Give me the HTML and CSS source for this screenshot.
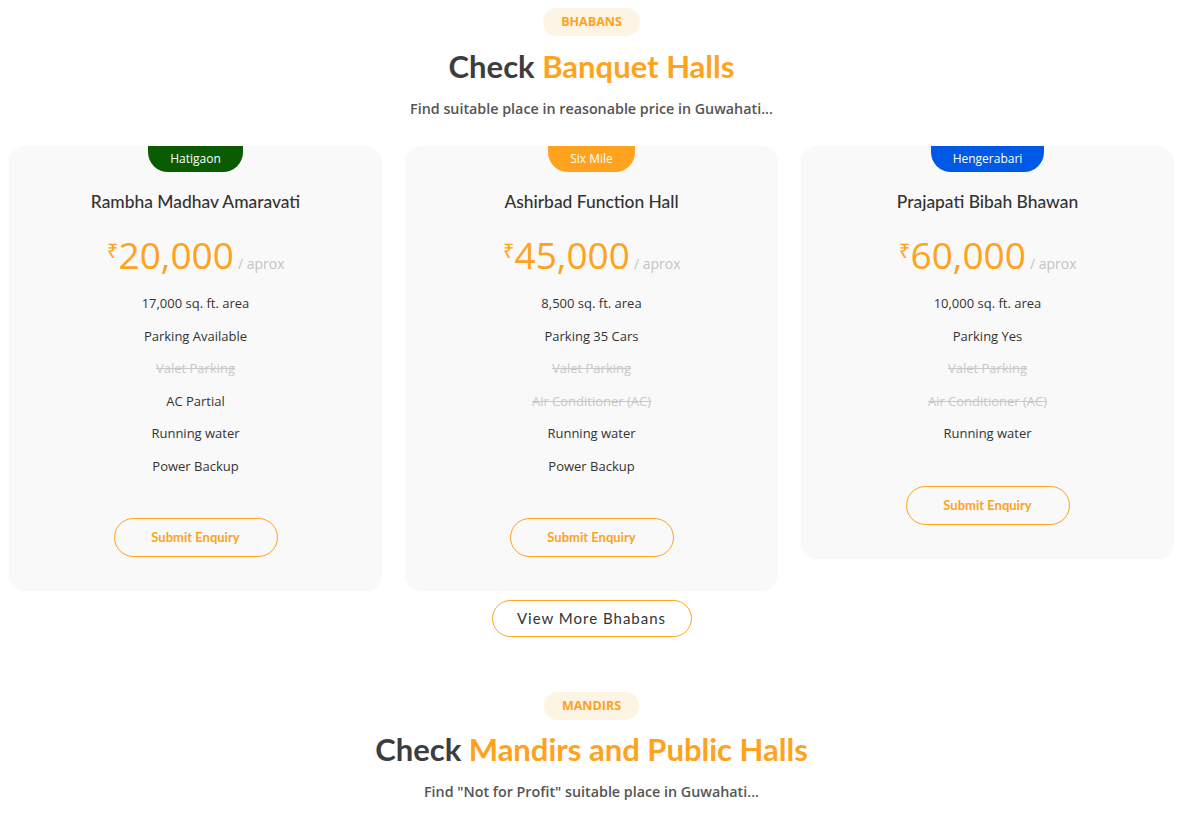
FILE: index.html
```html
<!DOCTYPE html>
<html lang="en">
<head>
    <meta charset="UTF-8">
    <meta name="viewport" content="width=device-width, initial-scale=1.0">
    <title>Bhabans - Guwahati</title>
    <link rel="stylesheet" href="styles.css">
</head>
<body>
    <div class="page">
        <section class="section">
            <div class="section-head">
                <span class="pill">BHABANS</span>
                <h2>Check <span>Banquet Halls</span></h2>
                <p>Find suitable place in reasonable price in Guwahati...</p>
            </div>

            <div class="cards">
                <div class="card">
                    <span class="area green">Hatigaon</span>
                    <h3>Rambha Madhav Amaravati</h3>
                    <div class="price"><sup>&#8377;</sup>20,000<small>/ aprox</small></div>
                    <ul class="features">
                        <li>17,000 sq. ft. area</li>
                        <li>Parking Available</li>
                        <li class="no">Valet Parking</li>
                        <li>AC Partial</li>
                        <li>Running water</li>
                        <li>Power Backup</li>
                    </ul>
                    <a href="#" class="enquiry">Submit Enquiry</a>
                </div>

                <div class="card">
                    <span class="area orange">Six Mile</span>
                    <h3>Ashirbad Function Hall</h3>
                    <div class="price"><sup>&#8377;</sup>45,000<small>/ aprox</small></div>
                    <ul class="features">
                        <li>8,500 sq. ft. area</li>
                        <li>Parking 35 Cars</li>
                        <li class="no">Valet Parking</li>
                        <li class="no">Air Conditioner (AC)</li>
                        <li>Running water</li>
                        <li>Power Backup</li>
                    </ul>
                    <a href="#" class="enquiry">Submit Enquiry</a>
                </div>

                <div class="card">
                    <span class="area blue">Hengerabari</span>
                    <h3>Prajapati Bibah Bhawan</h3>
                    <div class="price"><sup>&#8377;</sup>60,000<small>/ aprox</small></div>
                    <ul class="features">
                        <li>10,000 sq. ft. area</li>
                        <li>Parking Yes</li>
                        <li class="no">Valet Parking</li>
                        <li class="no">Air Conditioner (AC)</li>
                        <li>Running water</li>
                    </ul>
                    <a href="#" class="enquiry">Submit Enquiry</a>
                </div>
            </div>

            <div class="more">
                <a href="#" class="more-btn">View More Bhabans</a>
            </div>
        </section>

        <section class="section">
            <div class="section-head">
                <span class="pill">MANDIRS</span>
                <h2>Check <span>Mandirs and Public Halls</span></h2>
                <p>Find "Not for Profit" suitable place in Guwahati...</p>
            </div>
        </section>
    </div>
</body>
</html>
```

FILE: styles.css
```css
body {
    font-family: "Open Sans", sans-serif;
    background-color: #fff;
    color: #333;
    margin: 0;
}
.page {
    width: 1183px;
    padding: 0 9px;
    box-sizing: border-box;
}
.section-head {
    text-align: center;
}
.pill {
    display: inline-block;
    background-color: #fef4e4;
    color: #ffa21d;
    font-size: 12.5px;
    font-weight: 700;
    padding: 6px 18px;
    border-radius: 20px;
    margin-top: 8px;
    line-height: 16px;
}
.section-head h2 {
    font-family: Lato, sans-serif;
    font-size: 31px;
    font-weight: 700;
    color: #3d3d3d;
    margin: 12px 0 0;
    line-height: 36px;
}
.section-head h2 span {
    color: #ffa21d;
}
.section-head p {
    font-size: 14.3px;
    font-weight: 600;
    color: #555;
    margin: 15px 0 0;
    line-height: 20px;
}
.cards {
    display: flex;
    gap: 23px;
    align-items: flex-start;
    margin-top: 27px;
}
.card {
    flex: 1;
    background-color: #f9f9f9;
    border-radius: 16px;
    text-align: center;
    padding-bottom: 34px;
}
.area {
    display: inline-block;
    color: #fff;
    font-size: 12px;
    padding: 4px 22px 5px;
    line-height: 17px;
    border-radius: 0 0 20px 20px;
}
.green { background-color: #0b5b02; }
.orange { background-color: #ffa21d; }
.blue { background-color: #0058e6; }
.card h3 {
    font-family: Lato, sans-serif;
    font-size: 17.4px;
    font-weight: 500;
    color: #333;
    margin: 19px 0 0;
    line-height: 22px;
}
.price {
    color: #ffa21d;
    font-size: 37px;
    line-height: 44px;
    margin-top: 16px;
}
.price sup {
    font-size: 20px;
    vertical-align: 11px;
    margin-right: 1px;
}
.price small {
    font-size: 14px;
    color: #c4c4c4;
    margin-left: 4px;
}
.features {
    list-style: none;
    padding: 0;
    margin: 8px 0 0;
    font-size: 13px;
    color: #333;
}
.features li {
    line-height: 18px;
    margin-bottom: 14.5px;
}
.features li.no {
    color: #c8c8c8;
    text-decoration: line-through;
}
.enquiry {
    display: inline-block;
    margin-top: 29px;
    width: 164px;
    box-sizing: border-box;
    border: 1px solid #ffa21d;
    border-radius: 20px;
    color: #ffa21d;
    font-family: Lato, sans-serif;
    font-size: 13px;
    font-weight: 700;
    line-height: 37px;
    text-decoration: none;
}
.more {
    text-align: center;
    margin-top: 9px;
}
.more-btn {
    display: inline-block;
    width: 200px;
    box-sizing: border-box;
    border: 1px solid #ffa21d;
    border-radius: 20px;
    color: #333;
    font-family: Lato, sans-serif;
    font-size: 15px;
    letter-spacing: 1px;
    line-height: 35px;
    text-decoration: none;
}
.section + .section {
    margin-top: 47px;
}
.section + .section h2 {
    margin-top: 11px;
}
```
